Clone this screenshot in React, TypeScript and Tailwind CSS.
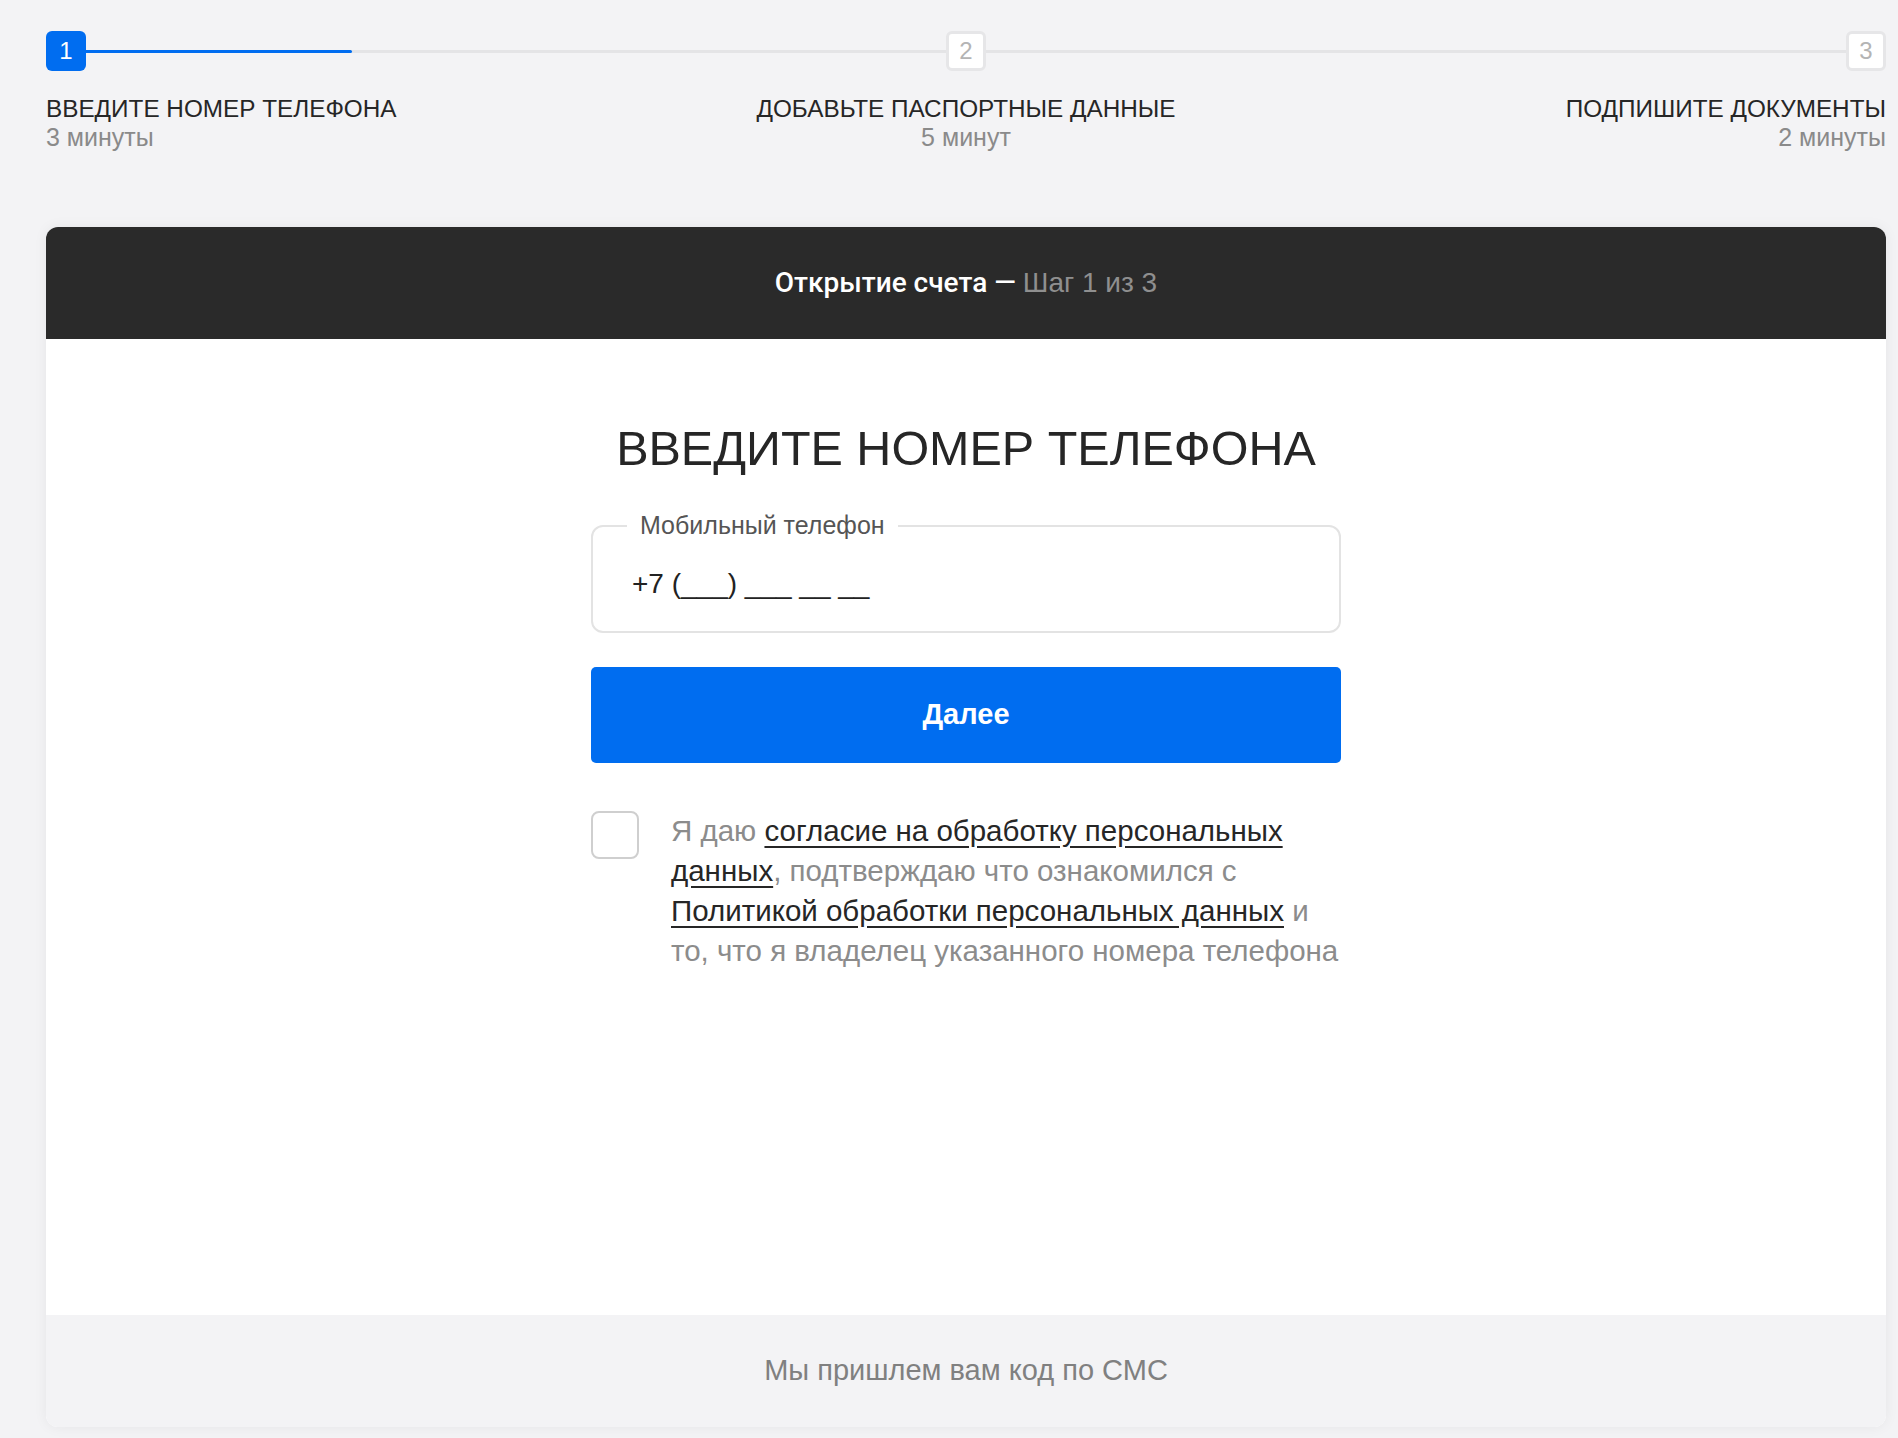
import { useState } from "react";

const steps = [
  { num: 1, title: "ВВЕДИТЕ НОМЕР ТЕЛЕФОНА", time: "3 минуты" },
  { num: 2, title: "ДОБАВЬТЕ ПАСПОРТНЫЕ ДАННЫЕ", time: "5 минут" },
  { num: 3, title: "ПОДПИШИТЕ ДОКУМЕНТЫ", time: "2 минуты" },
];

const StepBox = ({ num, active }: { num: number; active: boolean }) => (
  <div
    className={`size-[40px] shrink-0 rounded-[6px] flex items-center justify-center text-[24px] leading-none ${
      active
        ? "bg-[#006df0] text-white"
        : "bg-white border-[3px] border-[#e6e6e8] text-[#b4b4b4]"
    }`}
  >
    {num}
  </div>
);

const App = () => {
  const [phone, setPhone] = useState<string>("");
  const [agree, setAgree] = useState<boolean>(false);

  return (
    <div
      className="min-h-screen bg-[#f3f3f5] pl-[46px] pr-[12px] pt-[31px] pb-[11px]"
      style={{ fontFamily: '"Liberation Sans", Arial, sans-serif' }}
    >
      {/* stepper */}
      <div className="flex items-center">
        <StepBox num={1} active />
        <div className="flex-1 h-[3px] bg-[#e4e4e6]">
          <div className="h-full w-[266px] bg-[#006df0] rounded-r-full" />
        </div>
        <StepBox num={2} active={false} />
        <div className="flex-1 h-[3px] bg-[#e4e4e6]" />
        <StepBox num={3} active={false} />
      </div>
      <div className="grid grid-cols-3 mt-[24px]">
        {steps.map((step, i) => (
          <div
            key={step.num}
            className={
              i === 0 ? "text-left" : i === 1 ? "text-center" : "text-right"
            }
          >
            <div className="text-[24.3px] leading-[28px] text-[#262626]">
              {step.title}
            </div>
            <div className="text-[25px] leading-[28px] text-[#8a8a8a]">
              {step.time}
            </div>
          </div>
        ))}
      </div>

      {/* card */}
      <div className="mt-[76px] rounded-[12px] bg-white shadow-[0_0_14px_rgba(0,0,0,0.06)] overflow-hidden">
        <div className="h-[112px] bg-[#2a2a2a] flex items-center justify-center text-[28px]">
          <span
            className="text-white font-medium"
            style={{ fontFamily: "Roboto, sans-serif" }}
          >
            Открытие счета —&nbsp;
          </span>
          <span className="text-[#8f8f8f]">Шаг 1 из 3</span>
        </div>

        <div className="h-[976px] flex flex-col items-center pt-[80px]">
          <h1 className="text-[48.5px] leading-[58px] text-[#262626]">
            ВВЕДИТЕ НОМЕР ТЕЛЕФОНА
          </h1>

          <div className="w-[750px] mt-[48px]">
            <div className="relative h-[108px] border-2 border-[#e3e3e3] rounded-[12px] flex items-center px-[39px] pt-[10px]">
              <span className="absolute left-[34px] -top-[16px] bg-white px-[13px] text-[25px] leading-[28px] text-[#555555]">
                Мобильный телефон
              </span>
              <input
                type="text"
                className="w-full outline-none bg-transparent text-[28px] text-[#222222] placeholder:text-[#222222]"
                placeholder="+7 (___) ___ __ __"
                value={phone}
                onChange={(event) => {
                  setPhone(event.target.value);
                }}
              />
            </div>

            <button className="mt-[34px] w-full h-[96px] rounded-[5px] bg-[#006df0] text-white text-[29px] font-bold">
              Далее
            </button>

            <div className="mt-[48px] flex items-start gap-[32px]">
              <div
                className={`size-[48px] shrink-0 rounded-[8px] border-2 cursor-pointer ${
                  agree ? "border-[#006df0] bg-[#006df0]" : "border-[#cfcfcf] bg-white"
                }`}
                onClick={() => {
                  setAgree(!agree);
                }}
              />
              <p className="text-[29.5px] leading-[40px] text-[#8c8c8c]">
                Я даю{" "}
                <a className="text-[#262626] underline underline-offset-[5px]">
                  согласие на обработку персональных данных
                </a>
                , подтверждаю что ознакомился с{" "}
                <a className="text-[#262626] underline underline-offset-[5px]">
                  Политикой обработки персональных данных
                </a>{" "}
                и то, что я владелец указанного номера телефона
              </p>
            </div>
          </div>
        </div>

        <div className="h-[112px] bg-[#f3f3f5] flex items-center justify-center text-[29px] text-[#808080]">
          Мы пришлем вам код по СМС
        </div>
      </div>
    </div>
  );
};

export default App;
